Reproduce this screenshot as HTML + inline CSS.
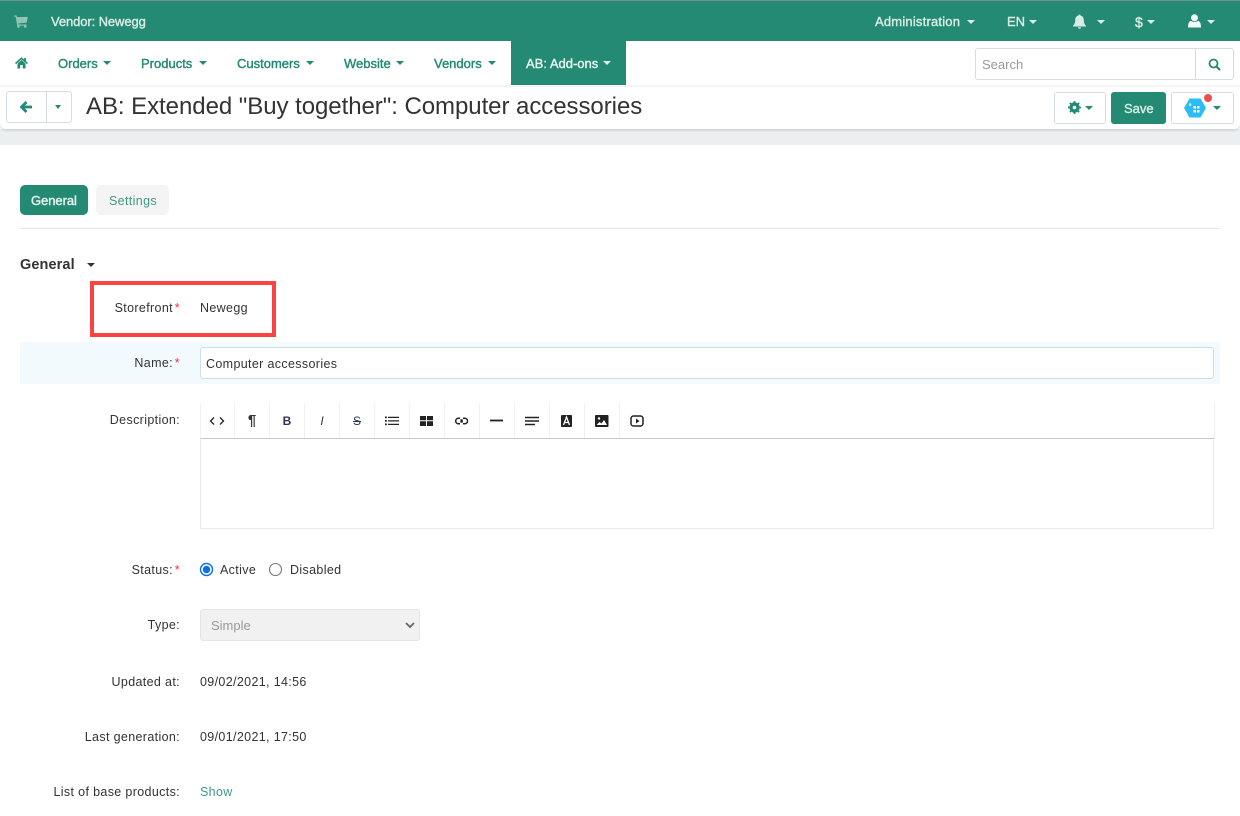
<!DOCTYPE html>
<html><head><meta charset="utf-8"><style>
html,body{margin:0;padding:0;width:1240px;height:816px;overflow:hidden;background:#fff;font-family:"Liberation Sans",sans-serif;font-size:12.5px;color:#333;letter-spacing:.35px}
.a,.t,.r,svg.i{position:absolute}
.t{white-space:nowrap;line-height:16px}
.r{white-space:nowrap;line-height:16px;text-align:right;right:1060px}
.n{font-size:13px;letter-spacing:0;-webkit-text-stroke:.4px currentColor}
.g{color:#248a73}
.w{color:#d6ece6}
.s{color:#ee3344}
.q{word-spacing:-2px}
.c{position:absolute;width:0;height:0;border-left:4px solid transparent;border-right:4px solid transparent;border-top:4px solid #248a73}
.cw{border-top-color:#dcefe9}
.btn{position:absolute;box-sizing:border-box;border:1px solid #d5dce2;border-radius:3px;background:#fff}
.tb{position:absolute;top:403px;width:35px;height:35px;border-right:1px solid #f0f0f0;box-sizing:border-box;text-align:center;line-height:36px;font-size:12px;color:#2c3550;letter-spacing:0}
</style></head><body>
<div class="a" style="left:0;top:0;width:1240px;height:41px;background:#248a73;border-top:1px solid #6f8f88;box-sizing:border-box"></div>
<svg class="i" style="left:14px;top:15px" width="14" height="13" viewBox="0 0 14 13"><path d="M0 .5h2.600l.4 1.500H13.800l-1.100 5.600-8.500.9.200 1H12.500v1.100H3.200L1.600 1.600H0z" fill="#8fc4b7"/><circle cx="4.500" cy="11.500" r="1.300" fill="#8fc4b7"/><circle cx="11.300" cy="11.500" r="1.300" fill="#8fc4b7"/></svg>
<span class="t w n" style="left:51px;top:14px;letter-spacing:-.1px">Vendor: Newegg</span>
<span class="t w n" style="left:875px;top:14px;letter-spacing:.2px">Administration</span><i class="c cw" style="left:967px;top:20px"></i>
<span class="t w n" style="left:1007px;top:14px">EN</span><i class="c cw" style="left:1029px;top:20px"></i>
<svg class="i" style="left:1072px;top:14px" width="15" height="15" viewBox="0 0 15 15"><path d="M7.500 0.500c.6 0 1 .4 1 1 2.200.5 3.300 2.200 3.300 4.500 0 3 .8 4.500 2.200 5.800v.7H1v-.7C2.400 10.500 3.200 9 3.200 6c0-2.300 1.100-4 3.300-4.500 0-.6.400-1 1-1zM6 13.200h3a1.500 1.500 0 0 1-3 0z" fill="#d6ece6"/></svg><i class="c cw" style="left:1097px;top:20px"></i>
<span class="t w n" style="left:1135px;top:14px;font-size:14px">$</span><i class="c cw" style="left:1147px;top:20px"></i>
<svg class="i" style="left:1188px;top:14px" width="13" height="14" viewBox="0 0 13 14"><circle cx="6.500" cy="3.800" r="3.500" fill="#f2f9f7"/><path d="M0 13.500c0-4.500 1.200-6.500 3.200-6.500 1.600 1.200 5 1.200 6.600 0 2 0 3.200 2 3.200 6.500z" fill="#f2f9f7"/></svg><i class="c cw" style="left:1207px;top:20px"></i>

<svg class="i" style="left:15px;top:57px" width="13" height="12" viewBox="0 0 13 12"><path d="M2.500 6.500L6.500 3l4 3.500v5H7.800V8H5.200v3.500H2.500z" fill="#248a73"/><path d="M.5 6.500L6.500 1.300l6 5.200" fill="none" stroke="#248a73" stroke-width="1.600"/><path d="M9.200 1h1.800v3.500L9.200 3z" fill="#248a73"/></svg>
<span class="t g n" style="left:58px;top:56px">Orders</span><i class="c" style="left:103px;top:61px"></i>
<span class="t g n" style="left:141px;top:56px">Products</span><i class="c" style="left:199px;top:61px"></i>
<span class="t g n" style="left:237px;top:56px">Customers</span><i class="c" style="left:306px;top:61px"></i>
<span class="t g n" style="left:344px;top:56px">Website</span><i class="c" style="left:396px;top:61px"></i>
<span class="t g n" style="left:434px;top:56px">Vendors</span><i class="c" style="left:488px;top:61px"></i>
<div class="a" style="left:511px;top:41px;width:115px;height:44px;background:#248a73"></div>
<span class="t w n" style="left:526px;top:56px;color:#e6f4f0">AB: Add-ons</span><i class="c cw" style="left:603px;top:61px"></i>

<div class="btn" style="left:975px;top:48px;width:221px;height:32px;border-radius:3px 0 0 3px"></div>
<span class="t" style="left:982px;top:57px;color:#999;font-size:13px;letter-spacing:0">Search</span>
<div class="btn" style="left:1195px;top:48px;width:39px;height:32px;border-radius:0 3px 3px 0"></div>
<svg class="i" style="left:1208px;top:58px" width="13" height="13" viewBox="0 0 13 13"><circle cx="5.500" cy="5.500" r="4" fill="none" stroke="#248a73" stroke-width="1.800"/><path d="M8.500 8.500L12 12" stroke="#248a73" stroke-width="2.200"/></svg>

<div class="a" style="left:0;top:129px;width:1240px;height:16px;background:#eceff1"></div>
<div class="a" style="left:0;top:86px;width:1240px;height:43px;background:#fff;border-top:1px solid #f3f4f5;border-radius:0 0 6px 6px;box-shadow:0 1px 3px rgba(0,0,0,.18);box-sizing:border-box"></div>

<div class="btn" style="left:6px;top:91px;width:41px;height:32px;border-radius:3px 0 0 3px"></div>
<div class="btn" style="left:46px;top:91px;width:26px;height:32px;border-radius:0 3px 3px 0"></div>
<svg class="i" style="left:20px;top:101px" width="12" height="12" viewBox="0 0 12 12"><path d="M6.500 1L1.500 6l5 5M2 6H12" fill="none" stroke="#248a73" stroke-width="2.800"/></svg>
<i class="c" style="left:55px;top:105px;border-left-width:3.500px;border-right-width:3.500px"></i>
<span class="t" style="left:86px;top:93px;font-size:24px;line-height:28px;color:#333;letter-spacing:-.05px">AB: Extended "Buy together": Computer accessories</span>

<div class="btn" style="left:1054px;top:92px;width:52px;height:32px"></div>
<svg class="i" style="left:1068px;top:101px" width="13" height="13" viewBox="0 0 13 13"><circle cx="6.500" cy="6.500" r="3.800" fill="none" stroke="#248a73" stroke-width="2.800"/><path d="M6.500 0v13M0 6.500h13M1.900 1.900l9.200 9.200M11.100 1.900l-9.200 9.200" stroke="#248a73" stroke-width="1.800"/><circle cx="6.500" cy="6.500" r="1.800" fill="#fff"/></svg>
<i class="c" style="left:1085px;top:106px"></i>
<div class="a" style="left:1111px;top:92px;width:55px;height:32px;background:#248a73;border-radius:3px"></div>
<span class="t w n" style="left:1124px;top:101px">Save</span>
<div class="btn" style="left:1171px;top:92px;width:63px;height:32px"></div>
<svg class="i" style="left:1184px;top:93px" width="30" height="27" viewBox="0 0 30 27"><path d="M5.500 5.500h11L22 15l-5.500 9.500h-11L0 15z" fill="#2bbcf3"/><g fill="#fff"><rect x="5" y="10.500" width="2.200" height="2.200"/><rect x="9.500" y="13" width="2.500" height="2.500"/><rect x="13" y="13" width="2.500" height="2.500"/><rect x="9.500" y="17" width="2.500" height="2.500"/><rect x="13" y="17" width="2.500" height="2.500"/></g><circle cx="24" cy="5" r="4" fill="#ee4d4d"/></svg>
<i class="c" style="left:1213px;top:106px"></i>

<div class="a" style="left:20px;top:185px;width:68px;height:30px;background:#248a73;border-radius:5px"></div>
<span class="t n" style="left:31px;top:193px;color:#e6f4f0;font-size:13px;letter-spacing:-.05px">General</span>
<div class="a" style="left:96px;top:185px;width:73px;height:30px;background:#f4f4f4;border-radius:5px"></div>
<span class="t" style="left:109px;top:193px;color:#3f9985">Settings</span>
<div class="a" style="left:20px;top:228px;width:1200px;height:1px;background:#e4e6ee"></div>

<span class="t" style="left:20px;top:257px;font-weight:bold;font-size:14.5px;color:#333;letter-spacing:.1px">General</span>
<i class="c" style="left:87px;top:263px;border-top-color:#333;border-left-width:4.500px;border-right-width:4.500px"></i>

<div class="a" style="left:90px;top:281px;width:186px;height:56px;border:4px solid #fb4343;box-sizing:border-box"></div>
<span class="r q" style="top:300px">Storefront <span class="s">*</span></span>
<span class="t" style="left:200px;top:299.500px">Newegg</span>

<div class="a" style="left:20px;top:342px;width:1200px;height:42px;background:#f3fafe"></div>
<span class="r q" style="top:355px">Name: <span class="s">*</span></span>
<div class="a" style="left:200px;top:347px;width:1014px;height:32px;box-sizing:border-box;border:1px solid #cfdbe6;border-radius:3px;background:#fff"></div>
<span class="t" style="left:206px;top:356px">Computer accessories</span>

<span class="r" style="top:412px">Description:</span>
<div class="a" style="left:200px;top:403px;width:1015px;height:36px;box-sizing:border-box;border-bottom:1px solid #c9c9c9;border-right:1px solid #eee;border-left:1px solid #f0f0f0"></div>
<div class="tb" style="left:200px"></div>
<div class="tb" style="left:235px;font-weight:bold;font-size:15px;color:#333">¶</div>
<div class="tb" style="left:270px;font-weight:bold">B</div>
<div class="tb" style="left:305px;font-style:italic;font-size:12px">I</div>
<div class="tb" style="left:340px"><s>S</s></div>
<div class="tb" style="left:375px"></div>
<div class="tb" style="left:410px"></div>
<div class="tb" style="left:445px"></div>
<div class="tb" style="left:480px"></div>
<div class="tb" style="left:515px"></div>
<div class="tb" style="left:550px"></div>
<div class="tb" style="left:585px"></div>
<div class="tb" style="left:620px;border:0"></div>
<svg class="i" style="left:200px;top:403px" width="460" height="36" viewBox="0 0 460 36">
<path d="M14 14.500L10.500 18l3.500 3.500M20 14.500l3.500 3.500-3.500 3.500" fill="none" stroke="#222" stroke-width="1.300"/>
<path d="M185 13.500h1.800v1.800H185zM185 17h1.800v1.800H185zM185 20.500h1.800v1.800H185zM188 13.700h11v1.300H188zM188 17.200h11v1.300H188zM188 20.700h11v1.300H188z" fill="#222"/>
<path d="M220 13h13v10h-13z" fill="#222"/><path d="M226.500 13v10M220 17.800h13" stroke="#fff" stroke-width="1"/>
<rect x="255.700" y="15.200" width="6.500" height="5.600" rx="2.800" fill="none" stroke="#222" stroke-width="1.500"/><rect x="261" y="15.200" width="6.500" height="5.600" rx="2.800" fill="none" stroke="#222" stroke-width="1.500"/><rect x="260" y="14" width="3" height="2.300" fill="#fff"/><rect x="260" y="19.700" width="3" height="2.300" fill="#fff"/>
<path d="M290 17.500h13" stroke="#222" stroke-width="1.800"/>
<path d="M325 13.800h14v1.500h-14zM325 17.300h14v1.500h-14zM325 20.800h10v1.500h-10z" fill="#222"/>
<rect x="361" y="12" width="11" height="12" rx="1" fill="#222"/><path d="M363.500 22l3-8 3 8M364.500 19.500h4" stroke="#fff" stroke-width="1.300" fill="none"/>
<rect x="395" y="12" width="13.500" height="12" rx="1" fill="#222"/><circle cx="399" cy="15.500" r="1.200" fill="#fff"/><path d="M396.500 22l3-3 2 1.500 2.500-3.500 3 5z" fill="#fff"/>
<rect x="431" y="13" width="12" height="10" rx="2.500" fill="none" stroke="#222" stroke-width="1.500"/><path d="M436 15.500l3.500 2.500-3.500 2.500z" fill="#222"/>
</svg>
<div class="a" style="left:200px;top:439px;width:1014px;height:90px;box-sizing:border-box;border:1px solid #e9e9e9;border-top:0"></div>

<span class="r q" style="top:562px">Status: <span class="s">*</span></span>
<svg class="i" style="left:199px;top:562px" width="16" height="15" viewBox="0 0 16 15"><circle cx="7.500" cy="7.500" r="6" fill="#fff" stroke="#0a6fe8" stroke-width="1.400"/><circle cx="7.500" cy="7.500" r="3.700" fill="#0a6fe8"/></svg>
<span class="t" style="left:220px;top:562px">Active</span>
<svg class="i" style="left:268px;top:562px" width="16" height="15" viewBox="0 0 16 15"><circle cx="7.500" cy="7.500" r="6" fill="#fff" stroke="#767676" stroke-width="1.100"/></svg>
<span class="t" style="left:290px;top:562px">Disabled</span>

<span class="r" style="top:617px">Type:</span>
<div class="a" style="left:200px;top:609px;width:220px;height:32px;box-sizing:border-box;border:1px solid #e3e6e8;border-radius:3px;background:#f1f1f1"></div>
<span class="t" style="left:211px;top:618px;color:#999;font-size:13px;letter-spacing:0">Simple</span>
<svg class="i" style="left:405px;top:622px" width="10" height="7" viewBox="0 0 10 7"><path d="M1 1l4 4 4-4" fill="none" stroke="#666" stroke-width="1.800"/></svg>

<span class="r" style="top:674px">Updated at:</span>
<span class="t" style="left:200px;top:673.500px">09/02/2021, 14:56</span>
<span class="r" style="top:729px">Last generation:</span>
<span class="t" style="left:200px;top:728.500px">09/01/2021, 17:50</span>
<span class="r" style="top:784px">List of base products:</span>
<span class="t" style="left:200px;top:784px;color:#3f9985">Show</span>
</body></html>
